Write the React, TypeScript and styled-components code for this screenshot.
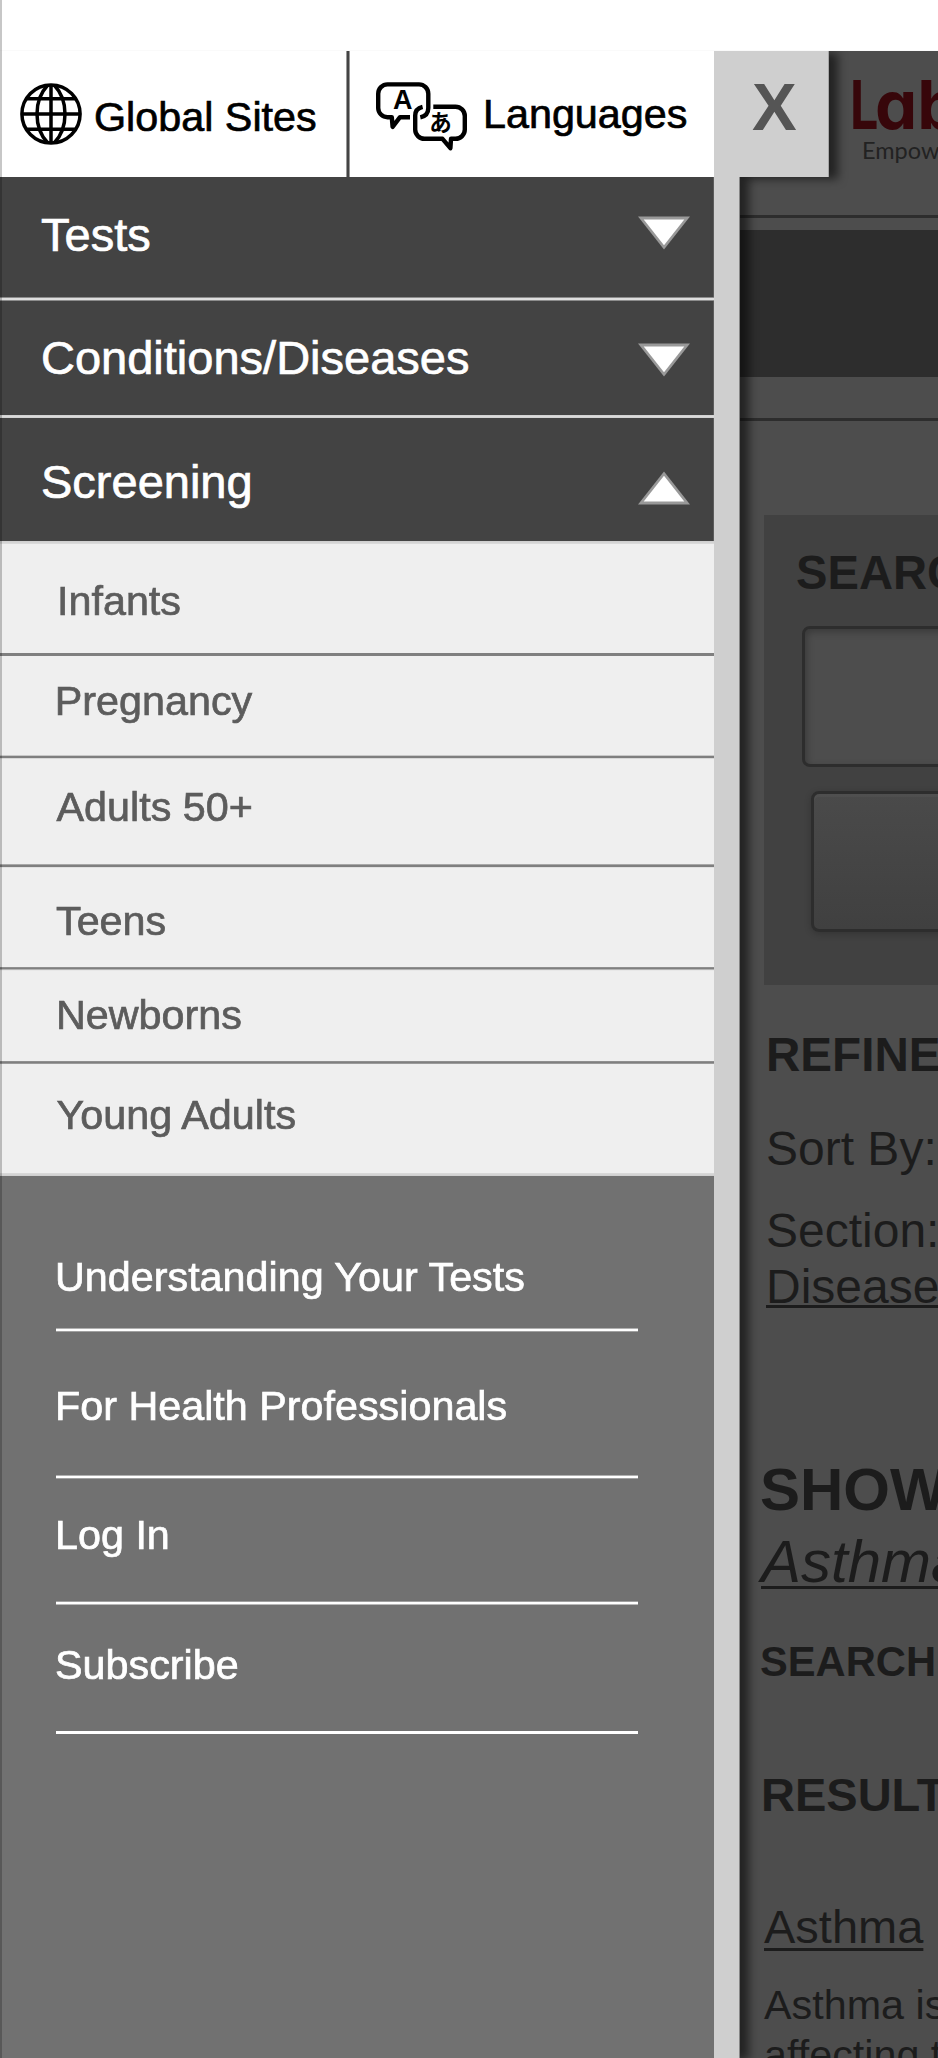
import React from "react";
import styled, { createGlobalStyle } from "styled-components";

const GlobalStyle = createGlobalStyle`
  *, *::before, *::after { box-sizing: border-box; }
  body { margin: 0; background: #fff; }
`;

const Screen = styled.div`
  position: relative;
  width: 938px;
  height: 2058px;
  overflow: hidden;
  display: flex;
  flex-direction: column;
  font-family: "Liberation Sans", Arial, Helvetica, sans-serif;
`;

const StatusStrip = styled.div`
  position: relative;
  z-index: 3;
  flex: none;
  height: 51px;
  background: #fff;
  border-bottom: 1px solid #fafafa;
`;

const LeftEdge = styled.div`
  position: absolute;
  z-index: 4;
  left: 0;
  top: 0;
  width: 2px;
  height: 100%;
  background: rgba(0, 0, 0, 0.22);
`;

const Stage = styled.div`
  flex: 1;
  min-height: 0;
  display: flex;
`;

/* ---------- drawer ---------- */

const DrawerWrap = styled.aside`
  position: relative;
  z-index: 2;
  flex: none;
  display: flex;
  width: 740px;
  filter: drop-shadow(9px 2px 5px rgba(0, 0, 0, 0.55));
`;

const Drawer = styled.div`
  width: 714px;
  display: flex;
  flex-direction: column;
  background: #717171;
  -webkit-text-stroke: 0.7px currentColor;
`;

const Rail = styled.div`
  width: 26px;
  background: #cfcfcf;
  border-right: 1px solid #868686;
`;

const CloseButton = styled.button`
  position: absolute;
  left: 714px;
  top: 0;
  display: flex;
  align-items: flex-start;
  width: 115px;
  height: 126px;
  padding: 26px 0 0 38px;
  border: 0;
  border-right: 1px solid #a6a6a6;
  background: #cfcfcf;
  color: #555;
  font: bold 67px/60px "Liberation Sans", Arial, sans-serif;
  text-align: left;
`;

const Utilities = styled.div`
  display: flex;
  height: 126px;
  background: #fff;
`;

const Utility = styled.a<{ $w: number; $pad: string; $gap: number }>`
  display: flex;
  align-items: flex-start;
  width: ${(p) => p.$w}px;
  padding: ${(p) => p.$pad};
  gap: ${(p) => p.$gap}px;
  color: #000;
`;

const UtilityText = styled.span<{ $drop: number }>`
  padding-top: ${(p) => p.$drop}px;
  font-size: 41.3px;
  line-height: 42px;
  white-space: nowrap;
`;

const UtilityDivider = styled.div`
  width: 4px;
  background: linear-gradient(90deg, #999 1px, #444 1px, #444 3px, #999 3px);
`;

const Rule = styled.div<{ $tones: string[] }>`
  flex: none;
  height: ${(p) => p.$tones.length}px;
  background: linear-gradient(
    ${(p) => p.$tones.map((t, i) => `${t} ${i}px ${i + 1}px`).join(", ")}
  );
`;

const MenuRow = styled.div<{ $h: number; $top: number }>`
  flex: none;
  display: flex;
  justify-content: space-between;
  height: ${(p) => p.$h}px;
  padding: ${(p) => p.$top}px 23px 0 41px;
  background: #434343;
  border-right: 1px solid #5c5c5c;
  color: #fff;
  font-size: 47px;
  line-height: 48px;
`;

const ArrowSlot = styled.span<{ $top: number }>`
  display: block;
  height: 34px;
  margin-top: ${(p) => p.$top}px;
  svg { display: block; }
`;

const SubRow = styled.a<{ $h: number; $top: number; $x: number }>`
  flex: none;
  display: block;
  height: ${(p) => p.$h}px;
  padding: ${(p) => p.$top}px 0 0 ${(p) => p.$x}px;
  background: #efefef;
  color: #5c5c5c;
  font-size: 41.3px;
  line-height: 42px;
`;

const Links = styled.nav`
  flex: 1;
  padding-left: 56px;
`;

const LinkRow = styled.a<{ $h: number; $top: number }>`
  display: block;
  height: ${(p) => p.$h}px;
  padding-top: ${(p) => p.$top}px;
  margin-left: -1px;
  color: #fff;
  font-size: 41.3px;
  line-height: 42px;
`;

const LinkRule = styled(Rule)`
  width: 582px;
`;

/* ---------- dimmed page ---------- */

const Dimmed = styled.main`
  flex: 1;
  min-width: 0;
  overflow: hidden;
  background: #4d4d4d;
  color: #1c1c1c;
  white-space: nowrap;
`;

const Brand = styled.header`
  height: 164px;
  padding: 14px 0 0 110px;
`;

const Wordmark = styled.div`
  display: flex;
  height: 80px;
  color: #37060a;
  font: 700 67px/80px Inter, sans-serif;
  font-feature-settings: "cv11";
`;

const NarrowCap = styled.span`
  width: 25px;
  transform: scaleX(0.75);
  transform-origin: left;
`;

const Tagline = styled.div`
  padding-left: 12px;
  margin-top: -9px;
  color: #222;
  font: 23.5px/28px Lato, sans-serif;
`;

const DarkBand = styled.div`
  height: 147px;
  margin: 12px 0 41px;
  background: #2d2d2d;
`;

const HairLine = styled.div`
  height: 3px;
  background: #2d2d2d;
`;

const SearchPanel = styled.section`
  height: 470px;
  margin: 94px 0 0 24px;
  padding: 34px 0 0 32px;
  background: #414141;
`;

const SearchTitle = styled.h2`
  height: 77px;
  margin: 0;
  font-size: 47.2px;
  line-height: 48px;
`;

const SearchInput = styled.div`
  width: 300px;
  height: 141px;
  margin-left: 6px;
  border: 3px solid #2d2d2d;
  border-radius: 8px;
  background: #4d4d4d;
  box-shadow: inset 2px 3px 7px rgba(0, 0, 0, 0.25);
`;

const SearchButton = styled.div`
  width: 300px;
  height: 141px;
  margin: 24px 0 0 15px;
  border: 3px solid #2d2d2d;
  border-radius: 8px;
  background: linear-gradient(#4a4a4a, #404040);
  box-shadow: inset 0 3px 0 rgba(255, 255, 255, 0.03), 0 2px 7px rgba(0, 0, 0, 0.2);
`;

const Line = styled.div<{ $size: number; $lh: number; $x: number; $top?: number; $bold?: boolean; $italic?: boolean }>`
  margin-top: ${(p) => p.$top ?? 0}px;
  padding-left: ${(p) => p.$x}px;
  font-size: ${(p) => p.$size}px;
  line-height: ${(p) => p.$lh}px;
  height: ${(p) => p.$lh}px;
  font-weight: ${(p) => (p.$bold ? 700 : 400)};
  font-style: ${(p) => (p.$italic ? "italic" : "normal")};
`;

const Underlined = styled.span<{ $offset: number }>`
  text-decoration: underline;
  text-decoration-thickness: 3px;
  text-decoration-skip-ink: none;
  text-underline-offset: ${(p) => p.$offset}px;
`;

/* ---------- icons ---------- */

const GlobeIcon = () => (
  <svg width="62" height="62" viewBox="0 0 62 62" fill="none" stroke="#000" strokeWidth="3.5">
    <circle cx="31" cy="31" r="29.1" />
    <path d="M31 1V61M1.5 31H60.5M6.5 15.8H55.5M6.5 46.2H55.5" />
    <path d="M27.5 2.5C13.5 17 13.5 45 27.5 59.5M34.5 2.5C48.5 17 48.5 45 34.5 59.5" />
  </svg>
);

const TranslateIcon = () => (
  <svg width="92" height="70" viewBox="0 0 92 70">
    <g fill="none" stroke="#000" strokeWidth="4.4" strokeLinejoin="round">
      <path d="M34 35.2H24L16.6 44.8L15.8 35.2H11.5A9.3 9.3 0 0 1 2.2 26V11.7A9.3 9.3 0 0 1 11.5 2.4H43A9.3 9.3 0 0 1 52.3 11.7V26C52.3 31.5 49.5 34.3 44.3 35.4" />
      <path d="M46.6 24.8C41.5 26 39.2 29 39.2 33.5V47.5A9.3 9.3 0 0 0 48.5 56.8H66.5L74.4 66.2L75 56.8H79.5A9.3 9.3 0 0 0 88.8 47.5V34A9.3 9.3 0 0 0 79.5 24.7H57.3" />
    </g>
    <text x="16.9" y="26.6" fontFamily="Liberation Sans, sans-serif" fontSize="27" fontWeight="700">A</text>
    <text x="53.3" y="48.6" fontFamily="Noto Sans CJK JP, sans-serif" fontSize="22.5" fontWeight="700">あ</text>
  </svg>
);

const Arrow = ({ up = false }: { up?: boolean }) => (
  <svg width="52" height="34" viewBox="0 0 52 34">
    <g transform={up ? "translate(0 34) scale(1 -1)" : undefined}>
      <polygon points="0,0.5 52,0.5 26,33.5" fill="#999" />
      <polygon points="5.7,3.6 46.3,3.6 26,29.2" fill="#fff" />
    </g>
  </svg>
);

/* ---------- data ---------- */

const lightSoft = ["#8c8c8c", "#dedede", "#dedede", "#8c8c8c"];
const lightCrisp = ["#d2d2d2", "#dadada", "#d2d2d2"];
const lightEdge = ["#d0d0d0", "#d4d4d4", "#dadada"];
const grey = ["#7f7f7f", "#7f7f7f", "#7f7f7f"];

const sections = [
  { name: "Tests", h: 120, top: 34, arrow: 5, up: false, rule: lightSoft },
  { name: "Conditions/Diseases", h: 114, top: 33, arrow: 9, up: false, rule: lightCrisp },
  { name: "Screening", h: 123, top: 40, arrow: 13, up: true, rule: lightEdge },
];

const screenings = [
  { name: "Infants", h: 109, top: 36, x: 57, rule: grey },
  { name: "Pregnancy", h: 99, top: 24, x: 54.8, rule: ["#c8c8c8", "#7f7f7f", "#7f7f7f", "#d8d8d8"] },
  { name: "Adults 50+", h: 105, top: 27, x: 56.5, rule: ["#a8a8a8", "#7f7f7f", "#7f7f7f", "#e0e0e0"] },
  { name: "Teens", h: 99, top: 32, x: 56, rule: ["#8f8f8f", "#7f7f7f", "#b4b4b4", "#e8e8e8"] },
  { name: "Newborns", h: 90, top: 23, x: 56, rule: ["#8f8f8f", "#7f7f7f", "#9a9a9a"] },
  { name: "Young Adults", h: 109, top: 30, x: 56.5, rule: ["#d8d8d8", "#d4d4d4", "#d0d0d0"] },
];

const links = [
  { name: "Understanding Your Tests", h: 152, top: 80, rule: ["#b0b0b0", "#fff", "#fff", "#a0a0a0"] },
  { name: "For Health Professionals", h: 143, top: 53, rule: ["#b0b0b0", "#fff", "#fff", "#a0a0a0"] },
  { name: "Log In", h: 122, top: 35, rule: ["#a0a0a0", "#fff", "#fff", "#b8b8b8"] },
  { name: "Subscribe", h: 126, top: 39, rule: ["#fff", "#fff", "#fff"] },
];

export default function App() {
  return (
    <Screen>
      <GlobalStyle />
      <StatusStrip />
      <LeftEdge />
      <Stage>
        <DrawerWrap>
          <Drawer>
            <Utilities>
              <Utility $w={346} $pad="32px 0 0 20px" $gap={12}>
                <GlobeIcon />
                <UtilityText $drop={13}>Global Sites</UtilityText>
              </Utility>
              <UtilityDivider />
              <Utility $w={364} $pad="31px 0 0 26px" $gap={15}>
                <TranslateIcon />
                <UtilityText $drop={11}>Languages</UtilityText>
              </Utility>
            </Utilities>
            {sections.map((s) => (
              <React.Fragment key={s.name}>
                <MenuRow $h={s.h} $top={s.top}>
                  {s.name}
                  <ArrowSlot $top={s.arrow}>
                    <Arrow up={s.up} />
                  </ArrowSlot>
                </MenuRow>
                <Rule $tones={s.rule} />
              </React.Fragment>
            ))}
            {screenings.map((s) => (
              <React.Fragment key={s.name}>
                <SubRow $h={s.h} $top={s.top} $x={s.x}>{s.name}</SubRow>
                <Rule $tones={s.rule} />
              </React.Fragment>
            ))}
            <Links>
              {links.map((l) => (
                <React.Fragment key={l.name}>
                  <LinkRow $h={l.h} $top={l.top}>{l.name}</LinkRow>
                  <LinkRule $tones={l.rule} />
                </React.Fragment>
              ))}
            </Links>
          </Drawer>
          <Rail />
          <CloseButton>X</CloseButton>
        </DrawerWrap>
        <Dimmed>
          <Brand>
            <Wordmark><NarrowCap>L</NarrowCap>ab</Wordmark>
            <Tagline>Empower</Tagline>
          </Brand>
          <HairLine />
          <DarkBand />
          <HairLine />
          <SearchPanel>
            <SearchTitle>SEARCH</SearchTitle>
            <SearchInput />
            <SearchButton />
          </SearchPanel>
          <Line $size={47.6} $lh={48} $x={26} $top={46} $bold>REFINE</Line>
          <Line $size={48} $lh={48} $x={26} $top={46}>Sort By:</Line>
          <Line $size={48} $lh={48} $x={26} $top={34}>Section:</Line>
          <Line $size={48} $lh={48} $x={26} $top={8}>
            <Underlined $offset={2}>Diseases</Underlined>
          </Line>
          <Line $size={60} $lh={60} $x={20} $top={149} $bold>SHOWING</Line>
          <Line $size={60} $lh={60} $x={21} $top={12} $italic>
            <Underlined $offset={4}>Asthma</Underlined>
          </Line>
          <Line $size={41.7} $lh={42} $x={20} $top={49} $bold>SEARCH</Line>
          <Line $size={47} $lh={48} $x={21} $top={88} $bold>RESULTS</Line>
          <Line $size={47} $lh={48} $x={24} $top={84}>
            <Underlined $offset={5}>Asthma</Underlined>
          </Line>
          <Line $size={41.3} $lh={42} $x={24} $top={33}>Asthma is</Line>
          <Line $size={41.3} $lh={42} $x={24} $top={8}>affecting the</Line>
        </Dimmed>
      </Stage>
    </Screen>
  );
}
